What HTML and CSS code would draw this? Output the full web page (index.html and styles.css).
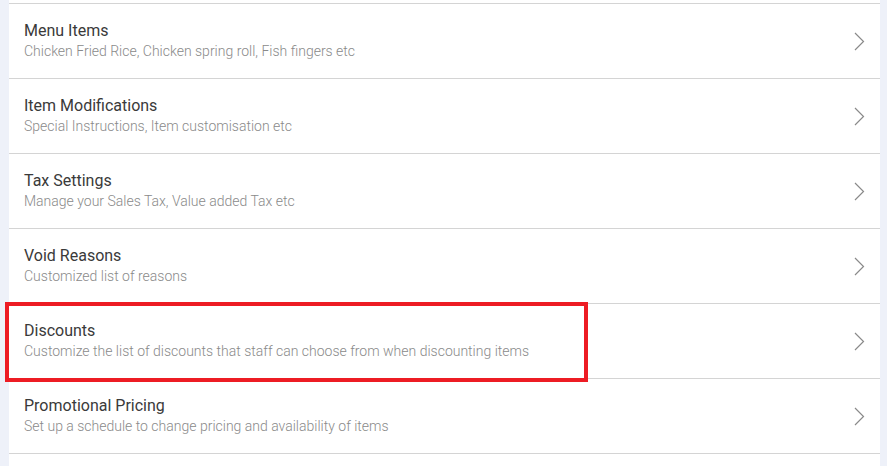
FILE: index.html
```html
<!DOCTYPE html>
<html>
<head>
<meta charset="utf-8">
<link rel="stylesheet" href="styles.css">
</head>
<body>
<div class="page">
  <div class="panel">
    <div class="row">
      <div class="text"><div class="title">Menu Items</div><div class="sub">Chicken Fried Rice, Chicken spring roll, Fish fingers etc</div></div>
      <svg class="chev" width="11" height="19" viewBox="0 0 11 19"><path d="M1 1 L9.5 9.5 L1 18" fill="none" stroke="#8a8a8a" stroke-width="1.2"/></svg>
    </div>
    <div class="row">
      <div class="text"><div class="title">Item Modifications</div><div class="sub">Special Instructions, Item customisation etc</div></div>
      <svg class="chev" width="11" height="19" viewBox="0 0 11 19"><path d="M1 1 L9.5 9.5 L1 18" fill="none" stroke="#8a8a8a" stroke-width="1.2"/></svg>
    </div>
    <div class="row">
      <div class="text"><div class="title">Tax Settings</div><div class="sub">Manage your Sales Tax, Value added Tax etc</div></div>
      <svg class="chev" width="11" height="19" viewBox="0 0 11 19"><path d="M1 1 L9.5 9.5 L1 18" fill="none" stroke="#8a8a8a" stroke-width="1.2"/></svg>
    </div>
    <div class="row">
      <div class="text"><div class="title">Void Reasons</div><div class="sub">Customized list of reasons</div></div>
      <svg class="chev" width="11" height="19" viewBox="0 0 11 19"><path d="M1 1 L9.5 9.5 L1 18" fill="none" stroke="#8a8a8a" stroke-width="1.2"/></svg>
    </div>
    <div class="row">
      <div class="text"><div class="title">Discounts</div><div class="sub">Customize the list of discounts that staff can choose from when discounting items</div></div>
      <svg class="chev" width="11" height="19" viewBox="0 0 11 19"><path d="M1 1 L9.5 9.5 L1 18" fill="none" stroke="#8a8a8a" stroke-width="1.2"/></svg>
    </div>
    <div class="row">
      <div class="text"><div class="title">Promotional Pricing</div><div class="sub">Set up a schedule to change pricing and availability of items</div></div>
      <svg class="chev" width="11" height="19" viewBox="0 0 11 19"><path d="M1 1 L9.5 9.5 L1 18" fill="none" stroke="#8a8a8a" stroke-width="1.2"/></svg>
    </div>
    <div class="row tail"></div>
  </div>
  <div class="highlight"></div>
</div>
</body>
</html>
```
FILE: styles.css
```css
html, body {
  margin: 0;
  padding: 0;
  background: #eef1f9;
  font-family: Roboto, "Liberation Sans", sans-serif;
}
.page {
  position: relative;
  width: 887px;
  height: 466px;
  overflow: hidden;
}
.panel {
  margin-left: 9px;
  width: 871px;
  background: #fff;
  padding-top: 3px;
}
.row {
  display: flex;
  align-items: center;
  justify-content: space-between;
  height: 74px;
  border-top: 1px solid #d4d4d4;
  padding: 0 15px 0 15px;
}
.text {
  display: flex;
  flex-direction: column;
  gap: 1px;
  padding-bottom: 1px;
}
.title {
  font-size: 16px;
  line-height: 20px;
  color: #3a3a3a;
}
.sub {
  font-size: 14px;
  font-weight: 300;
  line-height: 18px;
  color: #8a8a8a;
}
.chev {
  display: block;
}
.highlight {
  position: absolute;
  left: 5px;
  top: 302px;
  width: 575px;
  height: 72px;
  border: 4px solid #ed1c24;
}
```
